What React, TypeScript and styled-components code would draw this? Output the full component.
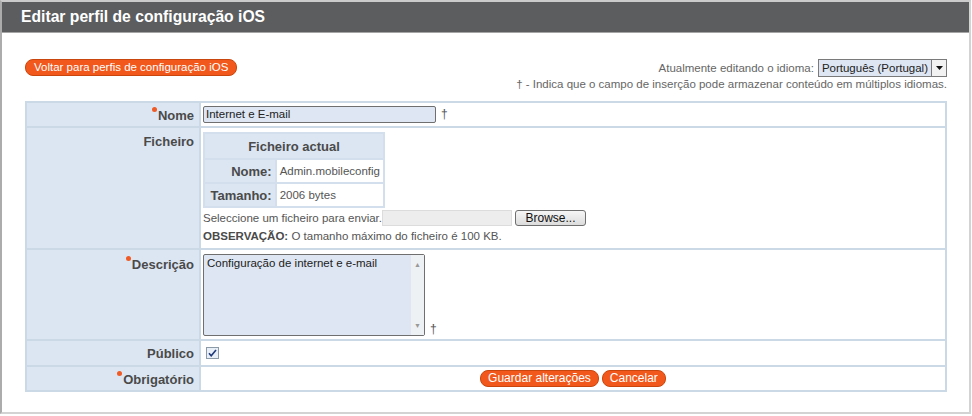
import styled, { createGlobalStyle } from "styled-components";

const GlobalStyle = createGlobalStyle`
  body {
    margin: 0;
    background: #ffffff;
    font-family: "Liberation Sans", Arial, sans-serif;
    color: #3c3c3c;
  }
`;

const Frame = styled.div`
  box-sizing: border-box;
  width: 971px;
  height: 414px;
  border: 2px solid #d3d3d3;
  border-left-color: #acacac;
  border-top-color: #cbcbcb;
  display: flex;
  flex-direction: column;
`;

const Header = styled.div`
  height: 30px;
  background: #5b5d5f;
  border-bottom: 1px solid #a5a5a5;
  display: flex;
  align-items: center;
  padding-left: 19px;
  color: #ffffff;
  font-size: 15.7px;
  font-weight: bold;
`;

const Body = styled.div`
  padding: 26px 22px 0 23px;
`;

const TopBar = styled.div`
  display: flex;
  justify-content: space-between;
  align-items: flex-start;
`;

const Pill = styled.button`
  font-family: "Liberation Sans", Arial, sans-serif;
  font-size: 11.5px;
  height: 17px;
  line-height: 15px;
  padding: 0 8px;
  border: 1px solid #c9470e;
  border-radius: 8px;
  background: #f2581b;
  color: #ffffff;
  cursor: pointer;
`;

const LangBlock = styled.div`
  display: flex;
  flex-direction: column;
  align-items: flex-end;
  gap: 1px;
  font-size: 11.5px;
  color: #666666;
`;

const LangRow = styled.div`
  display: flex;
  align-items: center;
  gap: 4px;
`;

const FakeSelect = styled.div`
  display: flex;
  align-items: stretch;
  height: 16px;
  border: 1px solid #7a7a7a;
  background: #dde6f2;
  color: #222222;
  font-size: 11.5px;
`;

const SelectText = styled.span`
  padding: 0 3px;
  line-height: 16px;
`;

const SelectArrow = styled.span`
  width: 14px;
  border-left: 1px solid #7a7a7a;
  background: #f2f2f2;
  display: flex;
  align-items: center;
  justify-content: center;
`;

const FormTable = styled.table`
  margin-top: 11px;
  width: 100%;
  border-collapse: collapse;
  border: 2px solid #cbd8e6;
`;

const Row = styled.tr`
  border-bottom: 2px solid #cbd8e6;
`;

const LabelCell = styled.th<{ $top?: boolean }>`
  width: 162px;
  background: #dce6f2;
  text-align: right;
  vertical-align: ${(p) => (p.$top ? "top" : "middle")};
  padding: ${(p) => (p.$top ? "6px 5px 0 5px" : "0 5px")};
  font-size: 13px;
  font-weight: bold;
  color: #4a4a4a;
  border-right: 2px solid #cbd8e6;
  white-space: nowrap;
`;

const ValueCell = styled.td<{ $center?: boolean; $h?: number }>`
  height: ${(p) => (p.$h ? `${p.$h}px` : "auto")};
  padding: 0 2px;
  vertical-align: middle;
  text-align: ${(p) => (p.$center ? "center" : "left")};
  font-size: 11.5px;
  background: #ffffff;
`;

const Dot = styled.span`
  display: inline-block;
  width: 5px;
  height: 5px;
  border-radius: 50%;
  background: #f05a24;
  vertical-align: 8px;
  margin-right: 1px;
`;

const TextInput = styled.div`
  display: inline-block;
  box-sizing: border-box;
  width: 233px;
  height: 17px;
  border: 1px solid #6f6f6f;
  border-radius: 2px;
  background: #dde6f2;
  padding: 0 2px;
  line-height: 15px;
  color: #222222;
  vertical-align: middle;
`;

const Dagger = styled.span`
  margin-left: 5px;
  color: #555555;
  font-size: 12px;
`;

const FileBlock = styled.div`
  padding: 4px 0 5px;
  display: flex;
  flex-direction: column;
`;

const InnerTable = styled.table`
  border-collapse: collapse;
  border: 2px solid #d3dfec;
  width: 182px;
`;

const InnerHead = styled.th`
  height: 22px;
  background: #dce6f2;
  border: 2px solid #d3dfec;
  text-align: center;
  font-size: 13px;
  color: #4a4a4a;
`;

const InnerLabel = styled.th`
  height: 22px;
  width: 64px;
  background: #dce6f2;
  border: 2px solid #d3dfec;
  text-align: right;
  padding: 0 3px;
  font-size: 13px;
  color: #4a4a4a;
`;

const InnerValue = styled.td`
  border: 2px solid #d3dfec;
  padding: 0 3px;
  font-size: 11.5px;
  color: #555555;
  white-space: nowrap;
`;

const UploadRow = styled.div`
  display: flex;
  align-items: center;
  height: 17px;
  margin-top: 1px;
  color: #555555;
`;

const FileBox = styled.span`
  width: 130px;
  height: 16px;
  background: #ededed;
  border: 1px solid #dcdcdc;
  box-sizing: border-box;
`;

const BrowseButton = styled.button`
  margin-left: 3px;
  height: 16px;
  width: 71px;
  padding: 0;
  font-family: "Liberation Sans", Arial, sans-serif;
  font-size: 12px;
  line-height: 14px;
  border: 1px solid #6f6f6f;
  border-radius: 3px;
  background: linear-gradient(#f6f6f6, #dcdcdc);
  color: #111111;
`;

const Note = styled.div`
  margin-top: 3px;
  line-height: 14px;
  color: #555555;

  & b {
    color: #4a4a4a;
  }
`;

const AreaWrap = styled.div`
  display: flex;
  align-items: flex-end;
`;

const TextArea = styled.div`
  box-sizing: border-box;
  width: 222px;
  height: 82px;
  border: 1px solid #6f6f6f;
  border-radius: 2px;
  background: #dde6f2;
  display: flex;
  color: #222222;
`;

const AreaText = styled.div`
  flex: 1;
  padding: 1px 3px;
  line-height: 14px;
`;

const ScrollTrack = styled.div`
  width: 13px;
  background: #eef1f4;
  display: flex;
  flex-direction: column;
  justify-content: space-between;
  align-items: center;
  padding: 6px 0;
  font-size: 7px;
  color: #999999;
`;

const Check = styled.span`
  display: inline-flex;
  align-items: center;
  justify-content: center;
  box-sizing: border-box;
  width: 13px;
  height: 12px;
  margin-left: 3px;
  border: 1px solid #8c9aa8;
  background: #e9eff6;
  vertical-align: middle;
`;

const ActionButton = styled(Pill)`
  font-size: 12px;
  margin: 0 1.5px;
  padding: 0 7px;
`;

const Req = ({ children }: { children: string }) => (
  <>
    <Dot />
    {children}
  </>
);

export default function App() {
  return (
    <>
      <GlobalStyle />
      <Frame>
        <Header>Editar perfil de configuração iOS</Header>
        <Body>
          <TopBar>
            <Pill type="button">Voltar para perfis de configuração iOS</Pill>
            <LangBlock>
              <LangRow>
                Atualmente editando o idioma:
                <FakeSelect>
                  <SelectText>Português (Portugal)</SelectText>
                  <SelectArrow>
                    <svg width="7" height="4" viewBox="0 0 7 4">
                      <path d="M0 0h7L3.5 4z" fill="#111" />
                    </svg>
                  </SelectArrow>
                </FakeSelect>
              </LangRow>
              <span>
                † - Indica que o campo de inserção pode armazenar conteúdo em múltiplos idiomas.
              </span>
            </LangBlock>
          </TopBar>

          <FormTable>
            <tbody>
              <Row>
                <LabelCell>
                  <Req>Nome</Req>
                </LabelCell>
                <ValueCell $h={23}>
                  <TextInput>Internet e E-mail</TextInput>
                  <Dagger>†</Dagger>
                </ValueCell>
              </Row>
              <Row>
                <LabelCell $top>Ficheiro</LabelCell>
                <ValueCell>
                  <FileBlock>
                    <InnerTable>
                      <tbody>
                        <tr>
                          <InnerHead colSpan={2}>Ficheiro actual</InnerHead>
                        </tr>
                        <tr>
                          <InnerLabel>Nome:</InnerLabel>
                          <InnerValue>Admin.mobileconfig</InnerValue>
                        </tr>
                        <tr>
                          <InnerLabel>Tamanho:</InnerLabel>
                          <InnerValue>2006 bytes</InnerValue>
                        </tr>
                      </tbody>
                    </InnerTable>
                    <UploadRow>
                      Seleccione um ficheiro para enviar.
                      <FileBox />
                      <BrowseButton type="button">Browse...</BrowseButton>
                    </UploadRow>
                    <Note>
                      <b>OBSERVAÇÃO:</b> O tamanho máximo do ficheiro é 100 KB.
                    </Note>
                  </FileBlock>
                </ValueCell>
              </Row>
              <Row>
                <LabelCell $top>
                  <Req>Descrição</Req>
                </LabelCell>
                <ValueCell $h={89}>
                  <AreaWrap>
                    <TextArea>
                      <AreaText>Configuração de internet e e-mail</AreaText>
                      <ScrollTrack>
                        <span>▲</span>
                        <span>▼</span>
                      </ScrollTrack>
                    </TextArea>
                    <Dagger>†</Dagger>
                  </AreaWrap>
                </ValueCell>
              </Row>
              <Row>
                <LabelCell>Público</LabelCell>
                <ValueCell $h={24}>
                  <Check>
                    <svg width="9" height="8" viewBox="0 0 9 8">
                      <path d="M1 4.2l2.2 2.6L8 1" fill="none" stroke="#1f3a7a" strokeWidth="1.6" />
                    </svg>
                  </Check>
                </ValueCell>
              </Row>
              <Row>
                <LabelCell>
                  <Req>Obrigatório</Req>
                </LabelCell>
                <ValueCell $h={23} $center>
                  <ActionButton type="button">Guardar alterações</ActionButton>
                  <ActionButton type="button">Cancelar</ActionButton>
                </ValueCell>
              </Row>
            </tbody>
          </FormTable>
        </Body>
      </Frame>
    </>
  );
}
